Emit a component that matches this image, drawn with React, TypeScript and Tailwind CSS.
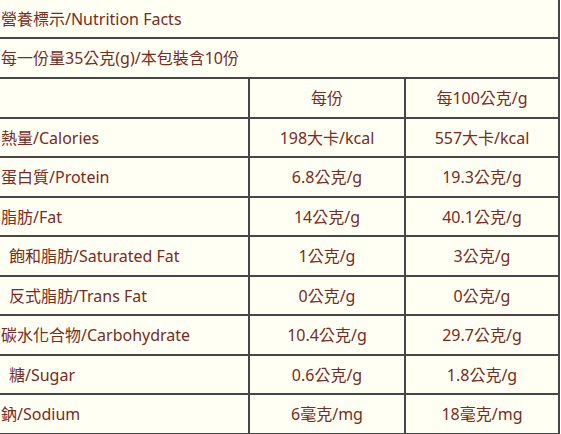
const rows = [
  { name: '熱量/Calories', per: '198大卡/kcal', per100: '557大卡/kcal', indent: false, h: 'h-[39px]' },
  { name: '蛋白質/Protein', per: '6.8公克/g', per100: '19.3公克/g', indent: false, h: 'h-[40px]' },
  { name: '脂肪/Fat', per: '14公克/g', per100: '40.1公克/g', indent: false, h: 'h-[39px]' },
  { name: '飽和脂肪/Saturated Fat', per: '1公克/g', per100: '3公克/g', indent: true, h: 'h-[40px]' },
  { name: '反式脂肪/Trans Fat', per: '0公克/g', per100: '0公克/g', indent: true, h: 'h-[39px]' },
  { name: '碳水化合物/Carbohydrate', per: '10.4公克/g', per100: '29.7公克/g', indent: false, h: 'h-[40px]' },
  { name: '糖/Sugar', per: '0.6公克/g', per100: '1.8公克/g', indent: true, h: 'h-[39px]' },
  { name: '鈉/Sodium', per: '6毫克/mg', per100: '18毫克/mg', indent: false, h: 'h-[40px]' },
];

export default function App() {
  return (
    <div
      className="min-h-screen bg-white"
      style={{ fontFamily: '"Noto Sans", "Noto Sans CJK TC", sans-serif' }}
    >
      <div className="w-[560px] bg-[#fffff4] border-r-2 border-[#474747] text-[16px] text-[#7a2a1e] leading-none">
        {/* Title */}
        <div className="h-[39px] flex items-center border-b-2 border-[#474747] pl-px">
          營養標示/Nutrition Facts
        </div>

        {/* Serving */}
        <div className="h-[40px] flex items-center border-b-2 border-[#474747] pl-px">
          每一份量35公克(g)/本包裝含10份
        </div>

        {/* Header */}
        <div className="h-[40px] flex border-b-2 border-[#474747]">
          <div className="w-[250px] border-r-2 border-[#474747]" />
          <div className="w-[156px] flex items-center justify-center border-r-2 border-[#474747]">
            每份
          </div>
          <div className="flex-1 flex items-center justify-center">每100公克/g</div>
        </div>

        {rows.map((r) => (
          <div key={r.name} className={`${r.h} flex border-b-2 border-[#474747]`}>
            <div
              className={`w-[250px] flex items-center border-r-2 border-[#474747] ${
                r.indent ? 'pl-[9px]' : 'pl-px'
              }`}
            >
              {r.name}
            </div>
            <div className="w-[156px] flex items-center justify-center border-r-2 border-[#474747]">
              {r.per}
            </div>
            <div className="flex-1 flex items-center justify-center">{r.per100}</div>
          </div>
        ))}
      </div>
    </div>
  );
}
